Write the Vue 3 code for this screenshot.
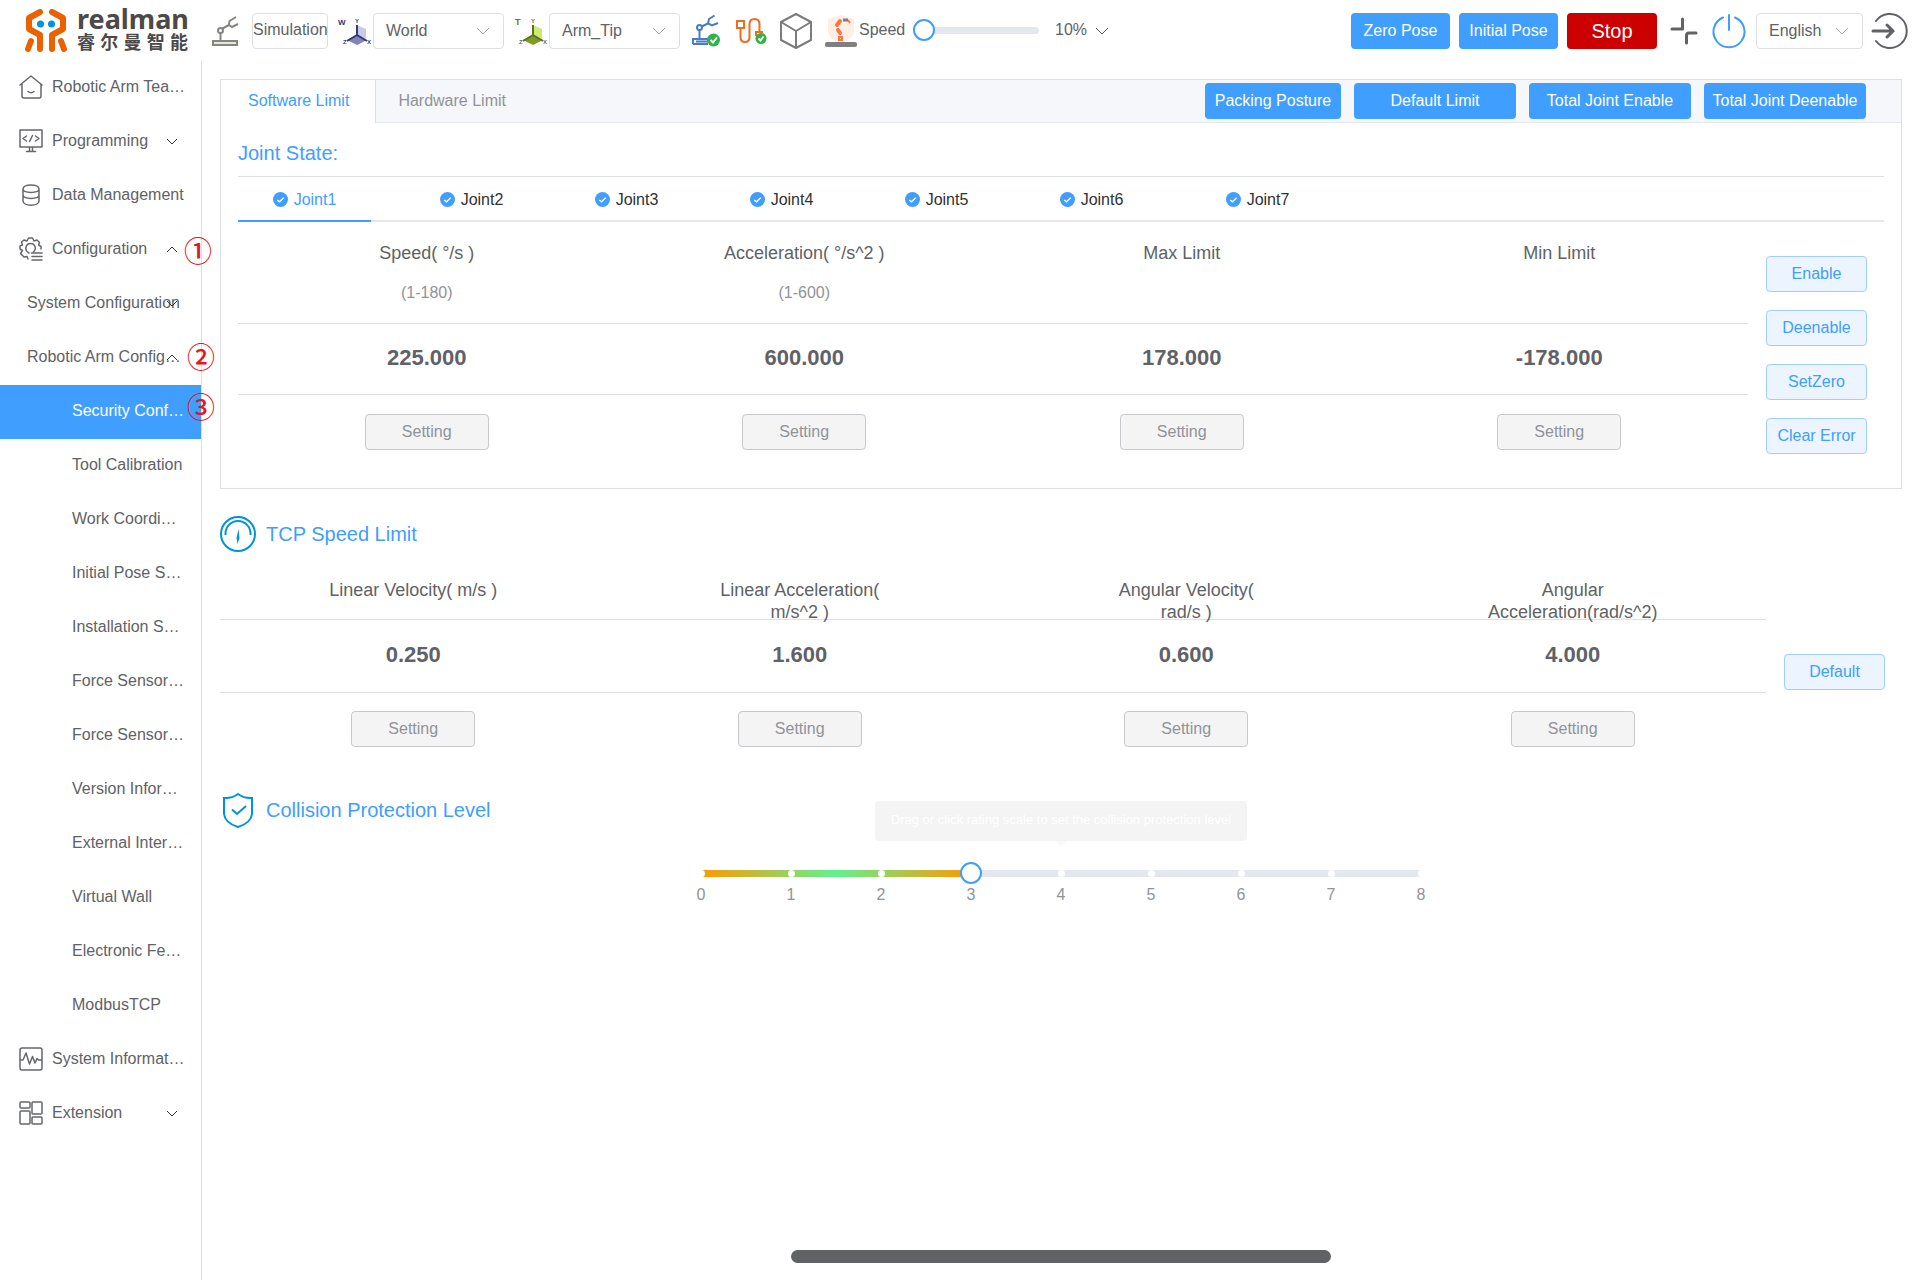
<script setup>
import { ref } from 'vue'

const frame = ref('World')
const tool = ref('Arm_Tip')
const language = ref('English')
const speed = ref(0)
const collision = ref(3)

const menu = [
  { label: 'Robotic Arm Tea…', level: 1, icon: 'home' },
  { label: 'Programming', level: 1, icon: 'code', arrow: 'down' },
  { label: 'Data Management', level: 1, icon: 'data' },
  { label: 'Configuration', level: 1, icon: 'gear', arrow: 'up', mark: '①', markClass: 'mark-a' },
  { label: 'System Configuration', level: 2, arrow: 'down' },
  { label: 'Robotic Arm Config…', level: 2, arrow: 'up', mark: '②', markClass: 'mark-b' },
  { label: 'Security Conf…', level: 3, active: true, mark: '③', markClass: 'mark-c' },
  { label: 'Tool Calibration', level: 3 },
  { label: 'Work Coordi…', level: 3 },
  { label: 'Initial Pose S…', level: 3 },
  { label: 'Installation S…', level: 3 },
  { label: 'Force Sensor…', level: 3 },
  { label: 'Force Sensor…', level: 3 },
  { label: 'Version Infor…', level: 3 },
  { label: 'External Inter…', level: 3 },
  { label: 'Virtual Wall', level: 3 },
  { label: 'Electronic Fe…', level: 3 },
  { label: 'ModbusTCP', level: 3 },
  { label: 'System Informat…', level: 1, icon: 'wave' },
  { label: 'Extension', level: 1, icon: 'blocks', arrow: 'down' }
]

const joints = ['Joint1', 'Joint2', 'Joint3', 'Joint4', 'Joint5', 'Joint6', 'Joint7']

const jointLimits = [
  { title: 'Speed( °/s )', range: '(1-180)', value: '225.000' },
  { title: 'Acceleration( °/s^2 )', range: '(1-600)', value: '600.000' },
  { title: 'Max Limit', range: '', value: '178.000' },
  { title: 'Min Limit', range: '', value: '-178.000' }
]

const tcpLimits = [
  { title: 'Linear Velocity( m/s )', value: '0.250' },
  { title: 'Linear Acceleration( m/s^2 )', value: '1.600' },
  { title: 'Angular Velocity( rad/s )', value: '0.600' },
  { title: 'Angular Acceleration(rad/s^2)', value: '4.000' }
]

const levels = [0, 1, 2, 3, 4, 5, 6, 7, 8]
</script>

<template>
  <div class="app">
    <header class="topbar">
      <a class="brand" href="#">
        <svg width="42" height="43" viewBox="0 0 42 43" fill="none" stroke="#eb6100" stroke-width="6" stroke-linecap="round" stroke-linejoin="round">
          <path d="M15 3 L4 9 V20 L15 26 V40" />
          <path d="M27 3 L38 9 V20 L27 26 V40" />
          <path d="M6 32 L3 40 M36 32 L39 40" />
          <g fill="#0093dd" stroke="none"><circle cx="15.500" cy="15" r="3.500" /><circle cx="26.500" cy="15" r="3.500" /></g>
        </svg>
        <span class="brand-text">
          <span class="brand-en">realman</span>
          <span class="brand-cn"><span>睿</span><span>尔</span><span>曼</span><span>智</span><span>能</span></span>
        </span>
      </a>

      <div class="tools">
        <svg class="arm" width="28" height="32" viewBox="0 0 28 32" fill="none" stroke="#85867f" stroke-width="2">
          <rect x="2" y="26" width="24" height="4" fill="#e4e6dc" />
          <path d="M9.500 26 V18 M11.500 13.500 L18 10 M25 2 L18.500 6 L18 10 L21 12 L27 9" />
          <circle cx="9.500" cy="15.500" r="2.500" />
        </svg>
        <button class="sim" type="button">Simulation</button>
        <svg class="axes" width="34" height="28" viewBox="0 0 34 28">
          <text x="0" y="8" font-size="8" font-weight="700" fill="#34387f">W</text>
          <path d="M19 8 L28 12 V22 L19 18 Z" fill="#c9c9e8" />
          <path d="M19 18 L29 23 L19 28 L9 23 Z" fill="#8184b5" />
          <path d="M19 8 V18 L29 24 M19 18 L9 24" stroke="#34387f" stroke-width="2" fill="none" />
          <g font-size="6" fill="#34387f" font-weight="700"><text x="17" y="6">Y</text><text x="5" y="27">Z</text><text x="29" y="27">X</text></g>
        </svg>
        <label class="select frame">
          <select v-model="frame" aria-label="Work frame"><option>World</option></select>
          <svg width="14" height="8" viewBox="0 0 14 8"><path d="M1 1 L7 7 L13 1" /></svg>
        </label>
        <svg class="axes tip" width="34" height="28" viewBox="0 0 34 28">
          <text x="1" y="8" font-size="9" font-weight="700" fill="#6b7142">T</text>
          <path d="M19 8 L28 12 V22 L19 18 Z" fill="#cdea72" />
          <path d="M19 18 L29 23 L19 28 L9 23 Z" fill="#7d9b25" />
          <path d="M19 8 V18 L29 24 M19 18 L9 24" stroke="#5d7320" stroke-width="2" fill="none" />
          <g font-size="6" fill="#6b7142" font-weight="700"><text x="17" y="6">Y</text><text x="5" y="27">Z</text><text x="29" y="27">X</text></g>
        </svg>
        <label class="select frame">
          <select v-model="tool" aria-label="Tool frame"><option>Arm_Tip</option></select>
          <svg width="14" height="8" viewBox="0 0 14 8"><path d="M1 1 L7 7 L13 1" /></svg>
        </label>
        <svg class="arm-ok" width="30" height="34" viewBox="0 0 30 34" fill="none" stroke="#4a7bc4" stroke-width="2">
          <path d="M2 30 V25 H17 M2 30 H17 M5 27.500 H17 M8.500 25 V16 M10.500 12.500 L17 9.500 M23.500 1.500 L18 5 L17 9.500 L21 11.500 L27 9" />
          <circle cx="8.500" cy="13.500" r="2.500" />
          <circle cx="22.500" cy="26" r="6.500" fill="#2fb344" stroke="none" />
          <path d="M19.500 26 L22 28.500 L26 23.500" stroke="#fff" />
        </svg>
        <svg class="cable" width="32" height="28" viewBox="0 0 32 28" fill="none" stroke="#ee6c1b" stroke-width="2">
          <rect x="2" y="4" width="7" height="7" />
          <path d="M5.500 11 V20 Q5.500 25 10 25 Q14.500 25 14.500 20 V7 Q14.500 2 19.500 2 Q24.500 2 24.500 7 V15 M21 19 V15 H28" />
          <circle cx="26" cy="21.500" r="5.500" fill="#2fb344" stroke="none" />
          <path d="M23.500 21.500 L25.500 23.500 L28.500 19.500" stroke="#fff" />
        </svg>
        <svg class="cube" width="32" height="36" viewBox="0 0 32 36" fill="none" stroke="#7b7c7d" stroke-width="2" stroke-linejoin="round">
          <path d="M16 1 L31 9 V27 L16 35 L1 27 V9 Z M1 9 L16 18 L31 9 M16 18 V35" />
        </svg>
        <svg class="pose" width="32" height="33" viewBox="0 0 32 33" fill="none">
          <path d="M16 1 L29 5 V18 Q28 25 16 29 Q4 25 3 18 V5 Z" fill="#fdefe5" />
          <path d="M15 7 L12 11 M13 16 L15 19" stroke="#ff7540" stroke-width="4" stroke-linecap="round" />
          <path d="M14 23 H17 V26 H14 Z M23 6 L25 9" stroke="#ff7540" stroke-width="2" />
          <path d="M18 6 H23" stroke="#7d7d7d" stroke-width="3" />
          <rect x="0" y="28" width="32" height="5" rx="2" fill="#808080" />
        </svg>
        <label class="speed" for="speed-range">Speed</label>
        <input id="speed-range" v-model="speed" class="range speed-range" type="range" min="0" max="100">
        <label class="select percent">
          <select aria-label="Speed percent"><option>10%</option></select>
          <svg width="14" height="8" viewBox="0 0 14 8"><path d="M1 1 L7 7 L13 1" /></svg>
        </label>
      </div>

      <div class="actions">
        <button class="btn primary pose-btn" type="button">Zero Pose</button>
        <button class="btn primary pose-btn" type="button">Initial Pose</button>
        <button class="btn stop" type="button">Stop</button>
        <button class="icon-btn collapse" type="button" aria-label="Collapse">
          <svg width="28" height="28" viewBox="0 0 28 28" fill="none" stroke="#606266" stroke-width="3" stroke-linecap="round" stroke-linejoin="round"><path d="M2 12 H12.500 V2 M26 16 H19 Q16.500 16 16.500 18.500 V26" /></svg>
        </button>
        <button class="icon-btn power" type="button" aria-label="Power">
          <svg width="34" height="36" viewBox="0 0 34 36" fill="none" stroke="#409eff" stroke-width="2" stroke-linecap="round"><path d="M17 2 V17 M11 4.500 A15.500 15.500 0 1 0 23 4.500" /></svg>
        </button>
        <label class="select lang">
          <select v-model="language" aria-label="Language"><option>English</option></select>
          <svg width="14" height="8" viewBox="0 0 14 8"><path d="M1 1 L7 7 L13 1" /></svg>
        </label>
        <button class="icon-btn logout" type="button" aria-label="Log out">
          <svg width="37" height="36" viewBox="0 0 37 36" fill="none" stroke="#606266" stroke-width="2" stroke-linecap="round"><path d="M5 8 A17 17 0 1 1 5 28" /><path d="M2 18 H22 M16 12 L22 18 L16 24" stroke-width="3" /></svg>
        </button>
      </div>
    </header>

    <div class="body">
      <nav class="sidebar">
        <ul>
          <li v-for="(item, i) in menu" :key="i" :class="['item', 'level-' + item.level, { active: item.active }]">
            <a href="#">
              <svg v-if="item.icon" class="menu-icon" width="24" height="24" viewBox="0 0 24 24" fill="none" stroke="#66676b" stroke-width="2" stroke-linecap="round" stroke-linejoin="round">
                <path v-if="item.icon === 'home'" stroke-width="1.500" d="M1 10 L12 1 L23 10 M3 9 V21 Q3 23 5 23 H20 Q22 23 22 21 V9 M9 16.500 Q12 19 15 16.500" />
                <path v-if="item.icon === 'code'" stroke-width="1.500" d="M1 1 H23 V18 H1 Z M10.500 18 V22 M13.500 18 V22 M7.500 22.500 H16.500 M7.500 7 L4 9.500 L7.500 12 M16.500 7 L20 9.500 L16.500 12 M13.500 6.500 L10.500 12.500" />
                <path v-if="item.icon === 'data'" stroke-width="1.500" d="M4 6 C4 0.500 20 0.500 20 6 C20 10.500 4 10.500 4 6 V18 C4 23.500 20 23.500 20 18 V6 M4 12 C4 16.500 20 16.500 20 12" />
                <path v-if="item.icon === 'gear'" stroke-width="1.500" d="M9 22 L8 19.500 L5 20 L1.500 16.500 L3.500 13.500 L1 12 V9 L3.500 8 L2.500 5 L5 3 L8 4 L9.500 1 H13.500 L15 4 L18 3 L20.500 5.500 L19.500 8 L22 9.500 V12 M10 16 C4.500 13 7 6.500 11.500 6.500 C16 6.500 18 11.500 14.500 15 M12.500 16 H23 M13 19.500 H23 M13 23 H23" />
                <path v-if="item.icon === 'wave'" stroke-width="1.500" d="M3 1 H21 Q23 1 23 3 V21 Q23 23 21 23 H3 Q1 23 1 21 V3 Q1 1 3 1 Z M1 13 H4 L7 6 L10.500 17 L13.500 9.500 L16 16 L18 11.500 L19.500 13 H23" />
                <g v-if="item.icon === 'blocks'" stroke-width="1.500"><rect x="1" y="1" width="10" height="6" rx="1" /><rect x="13" y="1" width="10" height="12" rx="1" /><rect x="1" y="10" width="10" height="13" rx="1" /><rect x="13" y="16" width="10" height="7" rx="1" /></g>
              </svg>
              <span>{{ item.label }}</span>
            </a>
            <svg v-if="item.arrow" :class="['arrow', item.arrow]" width="12" height="7" viewBox="0 0 12 7" fill="none" stroke="#303133" stroke-width="1"><path d="M1 1 L6 6 L11 1" /></svg>
            <span v-if="item.mark" :class="['mark', item.markClass]">{{ item.mark }}</span>
          </li>
        </ul>
      </nav>

      <main>
        <section class="panel">
          <div class="panel-head">
            <button class="tab current" type="button">Software Limit</button>
            <button class="tab" type="button">Hardware Limit</button>
            <div class="panel-actions">
              <button class="btn primary" type="button">Packing Posture</button>
              <button class="btn primary wide" type="button">Default Limit</button>
              <button class="btn primary wide" type="button">Total Joint Enable</button>
              <button class="btn primary wide" type="button">Total Joint Deenable</button>
            </div>
          </div>
          <div class="panel-body">
            <h2 class="joint-title">Joint State:</h2>
            <div class="joint-tabs">
              <button v-for="(joint, i) in joints" :key="joint" type="button" :class="['joint', { current: i === 0 }]">
                <svg width="15" height="15" viewBox="0 0 16 16"><circle cx="8" cy="8" r="8" fill="#409eff" /><path d="M4.500 8.500 L7 10.500 L11.500 6" fill="none" stroke="#fff" stroke-width="1.500" /></svg>
                {{ joint }}
              </button>
            </div>
            <div class="limits">
              <table class="joint-table">
                <thead>
                  <tr>
                    <th v-for="c in jointLimits" :key="c.title" scope="col">
                      <div class="name">{{ c.title }}</div>
                      <div class="hint">{{ c.range }}</div>
                    </th>
                  </tr>
                </thead>
                <tbody>
                  <tr class="values"><td v-for="c in jointLimits" :key="c.title">{{ c.value }}</td></tr>
                  <tr class="settings"><td v-for="c in jointLimits" :key="c.title"><button class="btn setting" type="button">Setting</button></td></tr>
                </tbody>
              </table>
              <div class="side">
                <button class="btn plain" type="button">Enable</button>
                <button class="btn plain" type="button">Deenable</button>
                <button class="btn plain" type="button">SetZero</button>
                <button class="btn plain" type="button">Clear Error</button>
              </div>
            </div>
          </div>
        </section>

        <section class="tcp">
          <h2 class="section-title">
            <svg width="36" height="36" viewBox="0 0 36 36" fill="none" stroke="#0093dd" stroke-width="2"><circle cx="18" cy="18" r="17" /><path d="M5.500 19 V17.500 A12.500 12.500 0 0 1 30.500 17.500 V19" /><path d="M18.500 13 L19.500 22 L17.500 28 L16.500 22 Z" fill="#0093dd" stroke="none" /></svg>
            TCP Speed Limit
          </h2>
          <div class="limits">
            <table class="tcp-table">
              <thead>
                <tr><th v-for="c in tcpLimits" :key="c.title" scope="col"><div class="name">{{ c.title }}</div></th></tr>
              </thead>
              <tbody>
                <tr class="values"><td v-for="c in tcpLimits" :key="c.title">{{ c.value }}</td></tr>
                <tr class="settings"><td v-for="c in tcpLimits" :key="c.title"><button class="btn setting" type="button">Setting</button></td></tr>
              </tbody>
            </table>
            <div class="side">
              <button class="btn plain" type="button">Default</button>
            </div>
          </div>
        </section>

        <section class="collision">
          <h2 class="section-title">
            <svg width="36" height="36" viewBox="0 0 36 36" fill="none" stroke="#0093dd" stroke-width="2"><path d="M18 2 Q24 6.500 32 6 V22 Q31 31 18 35 Q5 31 4 22 V6 Q12 6.500 18 2 Z" /><path d="M12 17.500 L17 22 L26 14" /></svg>
            Collision Protection Level
          </h2>
          <div class="scale">
            <div class="tip-box" role="tooltip">Drag or click rating scale to set the collision protection level</div>
            <div class="track">
              <div class="fill" :style="{ width: (collision / 8) * 100 + '%' }"></div>
              <div class="dots"><i v-for="n in levels" :key="n"></i></div>
            </div>
            <input v-model="collision" class="range level-range" type="range" min="0" max="8" step="1" aria-label="Collision protection level">
            <div class="numbers"><span v-for="n in levels" :key="n">{{ n }}</span></div>
          </div>
        </section>

        <div class="handle"></div>
      </main>
    </div>
  </div>
</template>

<style>
body {
  margin: 0;
  background: #fff;
}
</style>

<style scoped>
* {
  box-sizing: border-box;
}

.app {
  display: flex;
  flex-direction: column;
  min-height: 100vh;
  font-family: "Liberation Sans", "Noto Sans CJK SC", sans-serif;
  font-size: 16px;
  line-height: 22px;
  color: #606266;
}

svg {
  display: block;
  flex: none;
}

button,
select {
  font: inherit;
  color: inherit;
  cursor: pointer;
}

button {
  padding: 0;
  border: 0;
  background: none;
  white-space: nowrap;
}

h2 {
  margin: 0;
  font-size: 20px;
  line-height: 24px;
  font-weight: 400;
  color: #409eff;
}

/* top bar */
.topbar {
  display: flex;
  align-items: center;
  height: 61px;
  padding: 0 12px 0 25px;
}

.brand {
  display: flex;
  gap: 10px;
  color: #4c4948;
  text-decoration: none;
}

.brand-text {
  width: 111px;
}

.brand-en {
  display: block;
  margin-top: -1px;
  font-family: "Noto Sans", sans-serif;
  font-size: 27px;
  line-height: 22px;
  font-weight: 700;
}

.brand-cn {
  display: flex;
  justify-content: space-between;
  font-family: "Noto Sans CJK SC", sans-serif;
  font-size: 18px;
  line-height: 22px;
  font-weight: 700;
}

.tools,
.actions {
  display: flex;
  align-items: center;
}

.tools {
  margin-left: 23px;
}

.actions {
  margin-left: auto;
}

.sim {
  width: 76px;
  height: 36px;
  margin: 0 10px 0 13px;
  padding-bottom: 2px;
  border: 1px solid #dcdfe6;
  border-radius: 4px;
}

.tip {
  margin-left: 10px;
}

.select {
  position: relative;
  display: block;
}

.select select {
  width: 100%;
  height: 36px;
  padding: 0 12px;
  border: 1px solid #dcdfe6;
  border-radius: 4px;
  background: #fff;
  appearance: none;
}

.select svg {
  position: absolute;
  top: 14px;
  right: 14px;
  fill: none;
  stroke: #a8abb2;
  pointer-events: none;
}

.frame {
  width: 131px;
}

.axes + .frame {
  margin-left: 1px;
}

.arm-ok {
  margin-left: 11px;
}

.cable {
  margin-left: 14px;
}

.cube {
  margin-left: 13px;
}

.pose {
  margin: 0 2px 0 13px;
}

.speed {
  width: 54px;
  padding-bottom: 2px;
}

.range {
  height: 22px;
  margin: 0;
  background: none;
  appearance: none;
}

.range::-webkit-slider-thumb {
  width: 22px;
  height: 22px;
  border: 2px solid #409eff;
  border-radius: 50%;
  background: #fff;
  appearance: none;
}

.speed-range {
  width: 126px;
}

.speed-range::-webkit-slider-runnable-track {
  height: 7px;
  border-radius: 4px;
  background: #e4e7ed;
}

.speed-range::-webkit-slider-thumb {
  margin-top: -8px;
}

.percent {
  width: 54px;
  margin-left: 16px;
}

.percent select {
  padding: 0 0 2px;
  border: 0;
}

.percent svg {
  right: 0;
  stroke: #606266;
}

.btn {
  height: 36px;
  border-radius: 4px;
}

.primary {
  background: #409eff;
  color: #fff;
}

.pose-btn {
  width: 99px;
  margin-right: 9px;
}

.stop {
  width: 90px;
  background: #c00;
  color: #fff;
  font-size: 20px;
}

.collapse {
  margin: 0 14px 0 13px;
}

.lang {
  width: 107px;
  margin: 0 8px 0 10px;
}

/* side menu */
.body {
  display: flex;
  flex: 1;
}

.sidebar {
  flex: none;
  width: 202px;
  border-right: 1px solid #dcdfe6;
}

.sidebar ul {
  margin: 0;
  padding: 0;
  list-style: none;
}

.item {
  position: relative;
  height: 54px;
}

.item a {
  display: flex;
  align-items: center;
  height: 100%;
  padding-bottom: 2px;
  color: inherit;
  text-decoration: none;
  white-space: nowrap;
}

.level-1 a {
  gap: 9px;
  padding-left: 19px;
}

.level-2 a {
  padding-left: 27px;
}

.level-3 a {
  padding-left: 72px;
}

.active {
  background: #409eff;
  color: #fff;
}

.arrow {
  position: absolute;
  top: 23px;
  right: 23px;
}

.up {
  transform: rotate(180deg);
}

.mark {
  position: absolute;
  z-index: 1;
  font-family: "Noto Sans CJK SC", sans-serif;
  font-size: 28px;
  line-height: 28px;
  font-weight: 500;
  color: #e81420;
}

.mark-a {
  left: 184px;
  top: 13px;
}

.mark-b {
  left: 187px;
  top: 11px;
}

.mark-c {
  left: 187px;
  top: 7px;
}

/* content */
main {
  display: flex;
  flex: 1;
  flex-direction: column;
  min-width: 0;
  padding: 18px 18px 17px;
}

.panel {
  border: 1px solid #dcdfe6;
}

.panel-head {
  display: flex;
  background: #f5f7fa;
  box-shadow: inset 0 -1px #e4e7ed;
}

.tab {
  height: 43px;
  padding: 0 22px 1px;
  color: #909399;
}

.tab.current {
  padding-left: 27px;
  padding-right: 26px;
  border-right: 1px solid #dcdfe6;
  background: #fff;
  color: #409eff;
}

.panel-actions {
  display: flex;
  gap: 13px;
  margin: 3px 35px 0 auto;
}

.panel-actions .btn {
  width: 136px;
}

.panel-actions .wide {
  width: 162px;
}

.panel-body {
  padding: 0 17px 34px;
}

.joint-title {
  padding: 18px 0 11px;
  border-bottom: 1px solid #dcdfe6;
}

.joint-tabs {
  display: flex;
  height: 45px;
  box-shadow: inset 0 -2px #e4e7ed;
}

.joint {
  display: flex;
  align-items: center;
  justify-content: center;
  gap: 6px;
  width: 155px;
  color: #303133;
}

.joint.current {
  width: 133px;
  margin-right: 23px;
  border-bottom: 2px solid #409eff;
  padding-top: 2px;
  color: #409eff;
}

.joint:last-child {
  margin-left: 11px;
}

.limits {
  display: flex;
  align-items: flex-start;
  gap: 18px;
  padding-right: 17px;
}

table {
  flex: 1;
  width: 100%;
  table-layout: fixed;
  border-spacing: 0;
}

th,
td {
  padding: 0;
  text-align: center;
  font-weight: 400;
  vertical-align: top;
}

th,
.values td {
  border-bottom: 1px solid #dcdfe6;
}

.name {
  font-size: 18px;
}

.hint {
  height: 22px;
  margin-top: 18px;
  color: #909399;
}

.joint-table th {
  padding: 20px 0 19px;
}

.values td {
  height: 71px;
  padding-bottom: 2px;
  font-size: 22px;
  font-weight: 700;
  vertical-align: middle;
}

.settings td {
  padding-top: 18px;
}

.joint-table .settings td {
  padding-top: 19px;
}

.setting {
  width: 124px;
  border: 1px solid #c8c9cc;
  background: #f4f4f5;
  color: #909399;
}

.side {
  display: flex;
  flex: none;
  flex-direction: column;
  gap: 18px;
  width: 101px;
  margin-top: 34px;
}

.plain {
  border: 1px solid #a0cfff;
  background: #ecf5ff;
  color: #409eff;
}

.section-title {
  display: flex;
  align-items: center;
  gap: 10px;
  height: 36px;
}

.tcp {
  margin-top: 27px;
}

.tcp .side {
  margin-top: 102px;
}

.tcp-table .name {
  width: 180px;
  height: 40px;
  margin: 27px auto 0;
}

.tcp-table .values td {
  height: 73px;
}

.collision {
  margin-top: 45px;
}

.scale {
  position: relative;
  width: 720px;
  margin: 34px auto 0;
}

.tip-box {
  position: absolute;
  top: -61px;
  left: 50%;
  width: 372px;
  height: 40px;
  transform: translateX(-50%);
  border-radius: 4px;
  background: #f4f4f4;
  color: #fff;
  font-size: 13px;
  line-height: 38px;
  text-align: center;
  white-space: nowrap;
}

.tip-box::after {
  content: "";
  position: absolute;
  top: 100%;
  left: 50%;
  margin-left: -6px;
  border: 6px solid transparent;
  border-top-color: #fafafa;
}

.track {
  position: absolute;
  top: 8px;
  left: 0;
  right: 0;
  height: 7px;
  background: #e4e7ed;
}

.fill {
  height: 7px;
  background: linear-gradient(90deg, #f90, #5ff28f, #f90);
}

.dots {
  position: absolute;
  top: 0;
  left: -3px;
  right: -4px;
  display: flex;
  justify-content: space-between;
}

.dots i {
  width: 7px;
  height: 7px;
  border-radius: 50%;
  background: #fff;
}

.level-range {
  position: relative;
  display: block;
  width: calc(100% + 22px);
  margin: 0 -11px;
}

.numbers {
  display: flex;
  justify-content: space-between;
  margin: 0 -10px;
  color: #909399;
}

.numbers span {
  width: 20px;
  text-align: center;
}

.handle {
  width: 540px;
  height: 13px;
  margin: auto auto 0;
  border-radius: 7px;
  background: #606266;
}
</style>
